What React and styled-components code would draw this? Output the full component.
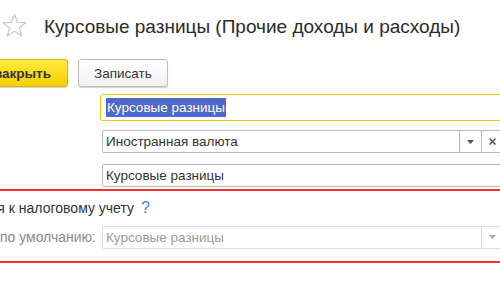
import styled, { createGlobalStyle } from 'styled-components';

const GlobalStyle = createGlobalStyle`
  body {
    margin: 0;
    background: #fff;
    font-family: "Liberation Sans", Arial, sans-serif;
    color: #333;
    overflow: hidden;
  }
`;

const Page = styled.div`
  width: 500px;
  height: 300px;
  overflow: hidden;
  background: #fff;
`;

/* ----------- Header ----------- */

const Header = styled.div`
  display: flex;
  align-items: center;
  gap: 16px;
  height: 50px;
  padding-left: 1px;
`;

const Title = styled.h1`
  margin: 0;
  padding-top: 3px;
  font-size: 19px;
  font-weight: normal;
  color: #2b2b2b;
  white-space: nowrap;
`;

function Star() {
  return (
    <svg width="27" height="25" viewBox="0 0 26 25">
      <path
        d="M13 1.5 L16.1 9.3 L24.5 9.6 L17.9 14.8 L20.2 23 L13 18.3 L5.8 23 L8.1 14.8 L1.5 9.6 L9.9 9.3 Z"
        fill="none"
        stroke="#c8c8c8"
        strokeWidth="1.2"
        strokeLinejoin="round"
      />
    </svg>
  );
}

/* ----------- Toolbar ----------- */

const Toolbar = styled.div`
  display: flex;
  gap: 10px;
  margin-top: 9px;
  height: 28px;
`;

const Btn = styled.button`
  height: 28px;
  padding: 0 15px;
  border-radius: 3px;
  font-family: inherit;
  font-size: 13.5px;
  color: #333;
  white-space: nowrap;
  cursor: pointer;
  border: 1px solid ${(p) => (p.primary ? '#d9b400' : '#bdbdbd')};
  font-weight: ${(p) => (p.primary ? 'bold' : 'normal')};
  background: ${(p) =>
    p.primary
      ? 'linear-gradient(#ffea3d, #f6d000)'
      : 'linear-gradient(#ffffff, #f1f1f1)'};
  box-shadow: 0 1px 1px rgba(0, 0, 0, 0.18);
`;

const CloseBtn = styled(Btn)`
  width: 200px;
  margin-left: -132px;
  text-align: right;
  padding-right: 16px;
`;

/* ----------- Form ----------- */

const Form = styled.div`
  display: flex;
  flex-direction: column;
  padding-top: 7px;
`;

const Row = styled.div`
  display: flex;
  align-items: center;
  margin-top: ${(p) => p.gap || 0}px;
  height: ${(p) => p.height || 23}px;
`;

const LabelCell = styled.div`
  width: ${(p) => p.width || 102}px;
  flex-shrink: 0;
  display: flex;
  justify-content: flex-end;
  white-space: nowrap;
  font-size: 14px;
  color: ${(p) => (p.muted ? '#8a8a8a' : '#333')};
  padding-right: ${(p) => p.pad || 0}px;
  box-sizing: border-box;
`;

const Field = styled.div`
  display: flex;
  align-items: stretch;
  width: 402px;
  height: 23px;
  box-sizing: border-box;
  border: 1px solid ${(p) => (p.disabled ? '#dcdcdc' : '#b8b8b8')};
  border-radius: 2px;
  background: #fff;
  flex-shrink: 0;
`;

const FocusRing = styled.div`
  margin-left: -2px;
  padding: 1px;
  border: 1px solid #f5c400;
  border-radius: 3px;
  flex-shrink: 0;

  ${Field} {
    border-color: transparent;
  }
`;

const Value = styled.div`
  flex: 1;
  display: flex;
  align-items: center;
  padding-left: 3px;
  font-size: 13.5px;
  color: ${(p) => (p.disabled ? '#9a9a9a' : '#333')};
  white-space: nowrap;
  overflow: hidden;
`;

const Selected = styled.span`
  background: #5068c8;
  color: #fff;
  padding: 2px 1px;
`;

const FieldBtn = styled.div`
  width: 21px;
  flex-shrink: 0;
  display: flex;
  align-items: center;
  justify-content: center;
  border-left: 1px solid ${(p) => (p.disabled ? '#dcdcdc' : '#b8b8b8')};
`;

function ArrowDown({ color }) {
  return (
    <svg width="7" height="4" viewBox="0 0 7 4">
      <path d="M0 0 H7 L3.5 4 Z" fill={color} />
    </svg>
  );
}

function Cross() {
  return (
    <svg width="7" height="7" viewBox="0 0 7 7">
      <path d="M0.5 0.5 L6.5 6.5 M6.5 0.5 L0.5 6.5" stroke="#555" strokeWidth="1.5" />
    </svg>
  );
}

const TaxBox = styled.div`
  margin-top: 2px;
  border-top: 2px solid #ff2e2e;
  border-bottom: 2px solid #ff2e2e;
  padding-bottom: 12px;
`;

const Help = styled.span`
  color: #3d8ad0;
  font-size: 16px;
  margin-left: 7px;
`;

const TextRow = styled.div`
  display: flex;
  align-items: center;
  height: 34px;
`;

function App() {
  return (
    <Page>
      <GlobalStyle />
      <Header>
        <Star />
        <Title>Курсовые разницы (Прочие доходы и расходы)</Title>
      </Header>

      <Toolbar>
        <CloseBtn primary>Записать и закрыть</CloseBtn>
        <Btn>Записать</Btn>
      </Toolbar>

      <Form>
        <Row height={27}>
          <LabelCell />
          <FocusRing>
            <Field>
              <Value>
                <Selected>Курсовые разницы</Selected>
              </Value>
            </Field>
          </FocusRing>
        </Row>
        <Row gap={9}>
          <LabelCell />
          <Field>
            <Value>Иностранная валюта</Value>
            <FieldBtn>
              <ArrowDown color="#555" />
            </FieldBtn>
            <FieldBtn>
              <Cross />
            </FieldBtn>
          </Field>
        </Row>
        <Row gap={11}>
          <LabelCell />
          <Field>
            <Value>Курсовые разницы</Value>
          </Field>
        </Row>

        <TaxBox>
          <TextRow>
            <LabelCell width={134}>Принимается к налоговому учету</LabelCell>
            <Help>?</Help>
          </TextRow>
          <Row height={24}>
            <LabelCell muted pad={6}>
              Статья по умолчанию:
            </LabelCell>
            <Field disabled>
              <Value disabled>Курсовые разницы</Value>
              <FieldBtn disabled>
                <ArrowDown color="#aaa" />
              </FieldBtn>
            </Field>
          </Row>
        </TaxBox>
      </Form>
    </Page>
  );
}

export default App;
